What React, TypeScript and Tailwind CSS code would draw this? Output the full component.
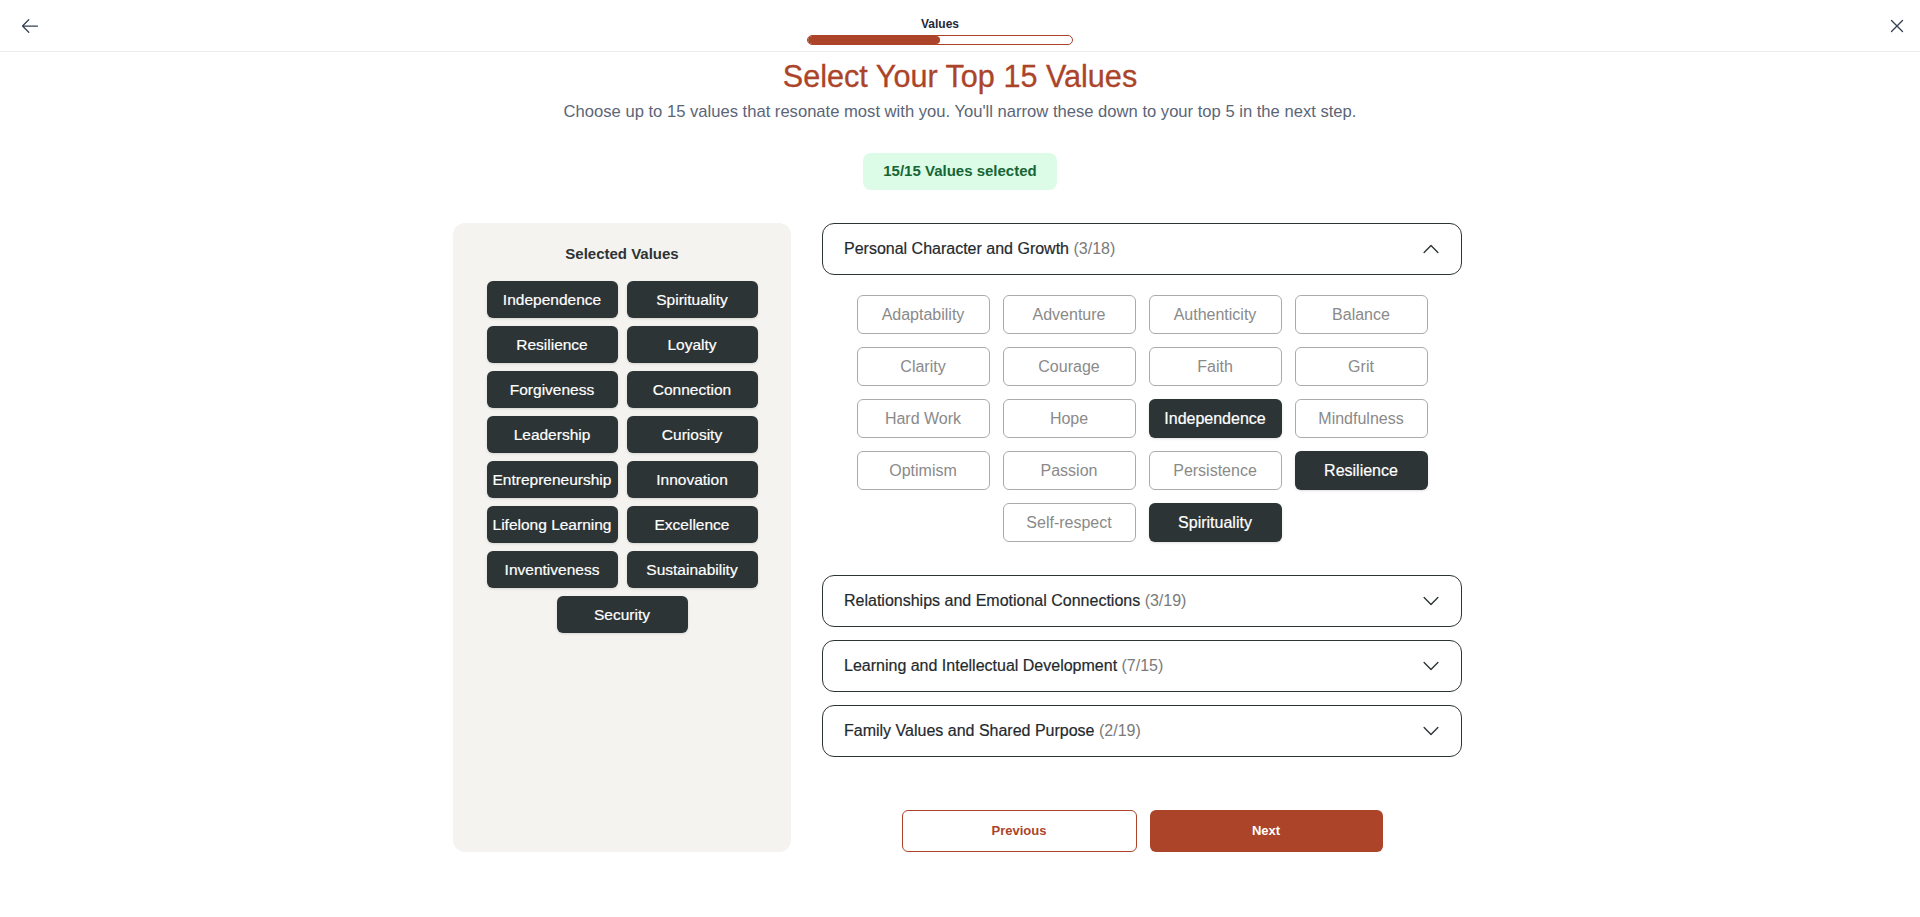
import { useState } from "react";

const SELECTED = [
  "Independence",
  "Spirituality",
  "Resilience",
  "Loyalty",
  "Forgiveness",
  "Connection",
  "Leadership",
  "Curiosity",
  "Entrepreneurship",
  "Innovation",
  "Lifelong Learning",
  "Excellence",
  "Inventiveness",
  "Sustainability",
  "Security",
];

const PERSONAL = [
  "Adaptability",
  "Adventure",
  "Authenticity",
  "Balance",
  "Clarity",
  "Courage",
  "Faith",
  "Grit",
  "Hard Work",
  "Hope",
  "Independence",
  "Mindfulness",
  "Optimism",
  "Passion",
  "Persistence",
  "Resilience",
  "Self-respect",
  "Spirituality",
];

const CATEGORIES = [
  { title: "Personal Character and Growth", count: "3/18", values: PERSONAL },
  { title: "Relationships and Emotional Connections", count: "3/19", values: [] },
  { title: "Learning and Intellectual Development", count: "7/15", values: [] },
  { title: "Family Values and Shared Purpose", count: "2/19", values: [] },
];

function Chevron({ up }: { up: boolean }) {
  return (
    <svg width="22" height="22" viewBox="0 0 24 24" fill="none" stroke="#2d3436" strokeWidth={1.5}>
      {up ? (
        <path strokeLinecap="round" strokeLinejoin="round" d="m4.5 15.75 7.5-7.5 7.5 7.5" />
      ) : (
        <path strokeLinecap="round" strokeLinejoin="round" d="m19.5 8.25-7.5 7.5-7.5-7.5" />
      )}
    </svg>
  );
}

export default function App() {
  const [open, setOpen] = useState<number | null>(0);
  const selected = new Set(SELECTED);

  return (
    <div className="min-h-screen bg-white font-['Liberation_Sans',Arial,sans-serif] text-[#2d3436]">
      {/* top bar */}
      <header className="flex h-[52px] items-start justify-between border-b border-[#ededed]">
        <div className="flex h-full w-[60px] items-center pl-[20px]">
          <button type="button" className="text-[#374151]">
            <svg width="20" height="20" viewBox="0 0 24 24" fill="none" stroke="currentColor" strokeWidth={1.5}>
              <path strokeLinecap="round" strokeLinejoin="round" d="M10.5 19.5 3 12m0 0 7.5-7.5M3 12h18" />
            </svg>
          </button>
        </div>
        <div className="flex flex-col items-center gap-[3px] pt-[16px]">
          <span className="text-[12px] font-bold leading-4 text-[#1e293b]">Values</span>
          <div className="h-[10px] w-[266px] overflow-hidden rounded-full border border-[#ab4429]">
            <div className="h-full w-1/2 rounded-full bg-[#ab4429]" />
          </div>
        </div>
        <div className="flex h-full w-[100px] items-center justify-end pr-[12px]">
          <button type="button" className="text-[#374151]">
            <svg width="22" height="22" viewBox="0 0 24 24" fill="none" stroke="currentColor" strokeWidth={1.5}>
              <path strokeLinecap="round" strokeLinejoin="round" d="M6 18 18 6M6 6l12 12" />
            </svg>
          </button>
        </div>
      </header>

      <main className="flex flex-col items-center">
        <h1 className="mt-[6px] text-[30.6px] leading-9 text-[#ab4429] [-webkit-text-stroke:0.3px_#ab4429]">
          Select Your Top 15 Values
        </h1>
        <p className="mt-[6px] text-[16.6px] leading-6 text-[#5b6577]">
          Choose up to 15 values that resonate most with you. You'll narrow these down to your top 5 in the next step.
        </p>
        <div className="mt-[29px] flex h-[37px] items-center rounded-lg bg-[#dcfce7] px-5 text-[15px] font-semibold text-[#166534]">
          15/15 Values selected
        </div>

        <div className="mt-[33px] flex items-stretch gap-[31px] pr-[5px]">
          <aside className="w-[338px] rounded-xl bg-[#f4f3f0] pt-[21px]">
            <h2 className="text-center text-[15px] font-semibold leading-5 text-[#2d3436]">Selected Values</h2>
            <div className="mx-auto mt-[17px] flex w-[272px] flex-wrap justify-center gap-x-[9px] gap-y-[8px]">
              {SELECTED.map((v) => (
                <div
                  key={v}
                  className="flex h-[37px] w-[131px] items-center justify-center rounded-md bg-[#2d3436] text-[15.5px] text-white shadow-sm [-webkit-text-stroke:0.2px_#ffffff]"
                >
                  {v}
                </div>
              ))}
            </div>
          </aside>

          <section className="flex w-[640px] flex-col">
            <div className="flex flex-col gap-[13px]">
              {CATEGORIES.map((c, i) => (
                <div key={c.title}>
                  <button
                    type="button"
                    onClick={() => setOpen(open === i ? null : i)}
                    className="flex h-[52px] w-full items-center justify-between rounded-xl border border-[#2d3436] pl-[21px] pr-[19px] text-left"
                  >
                    <span className="text-[16px] text-[#1f2a2e] [-webkit-text-stroke:0.2px_#1f2a2e]">
                      {c.title}{" "}
                      <span className="text-[#7a7a7a] [-webkit-text-stroke:0px]">({c.count})</span>
                    </span>
                    <Chevron up={open === i} />
                  </button>
                  {open === i && c.values.length > 0 && (
                    <div className="mx-auto flex w-[573px] flex-wrap justify-center gap-x-[13px] gap-y-[13px] pb-[20px] pt-[20px]">
                      {c.values.map((v) =>
                        selected.has(v) ? (
                          <div
                            key={v}
                            className="flex h-[39px] w-[133px] items-center justify-center rounded-md bg-[#2d3436] text-[16px] text-white shadow-sm [-webkit-text-stroke:0.2px_#ffffff]"
                          >
                            {v}
                          </div>
                        ) : (
                          <div
                            key={v}
                            className="flex h-[39px] w-[133px] items-center justify-center rounded-md border border-[#ababab] text-[16px] text-[#8a8a8a]"
                          >
                            {v}
                          </div>
                        )
                      )}
                    </div>
                  )}
                </div>
              ))}
            </div>

            <div className="mt-[53px] flex justify-center gap-[13px]">
              <button
                type="button"
                className="h-[42px] w-[235px] rounded-md border border-[#ab4429] bg-white text-[13px] font-semibold text-[#ab4429]"
              >
                Previous
              </button>
              <button
                type="button"
                className="h-[42px] w-[233px] rounded-md bg-[#ab4429] text-[13px] font-semibold text-white"
              >
                Next
              </button>
            </div>
          </section>
        </div>
      </main>
    </div>
  );
}
